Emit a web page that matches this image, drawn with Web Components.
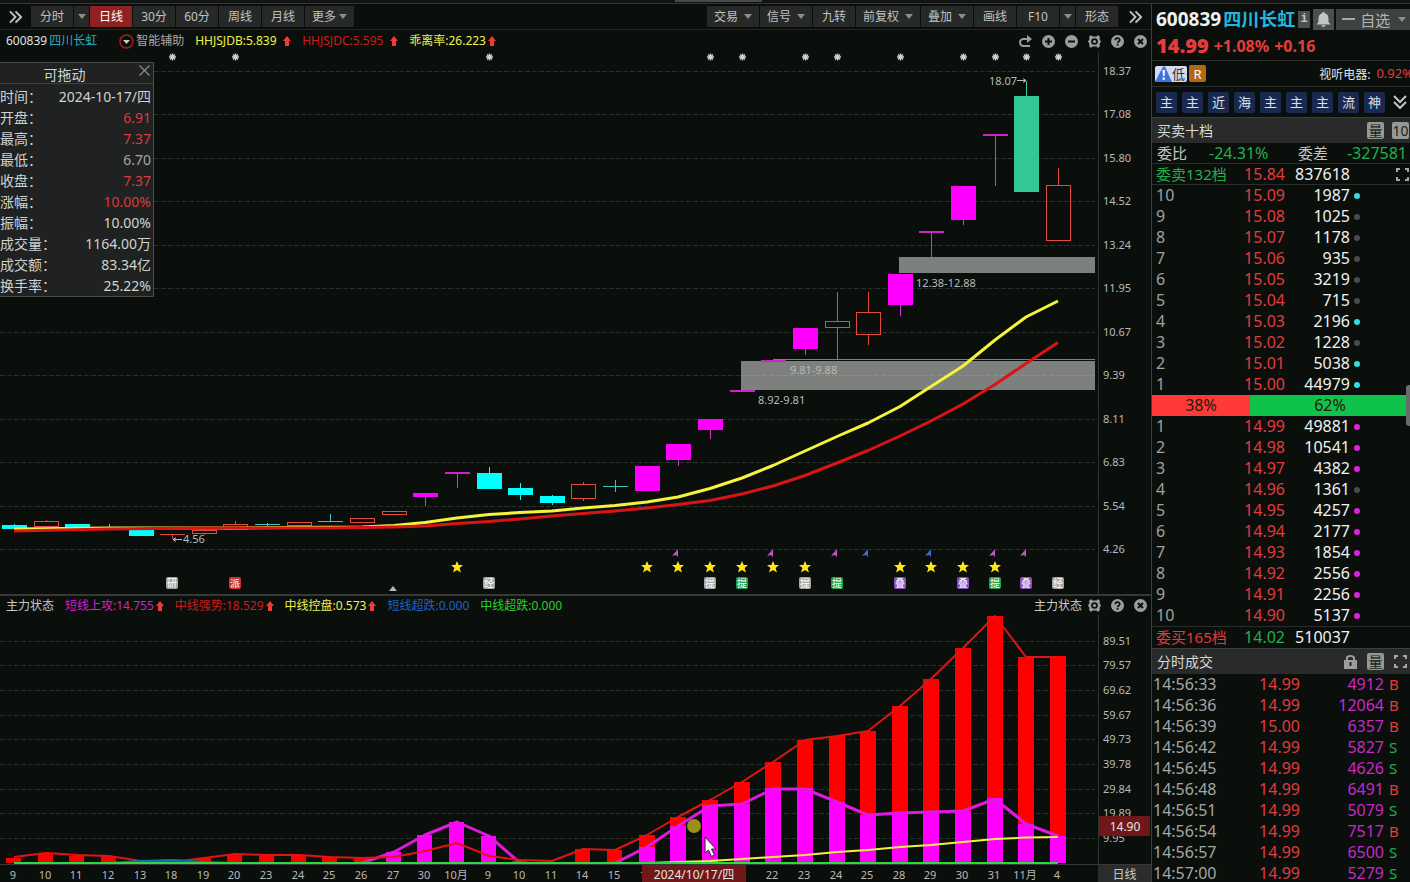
<!DOCTYPE html>
<html lang="zh-CN">
<head>
<meta charset="utf-8">
<title>四川长虹 600839</title>
<style>
html,body{margin:0;height:100%;background:#0b0f0c;overflow:hidden}
body{font-family:"Noto Sans","Noto Sans CJK SC",sans-serif;font-size:12px;color:#c8cac8}
</style>
</head>
<body>
<stock-terminal></stock-terminal>
<script>
const RESET = `*{box-sizing:border-box}
button{font:inherit;color:inherit;border:0;padding:0;margin:0;background:none;display:flex;align-items:center;justify-content:center}
svg{display:block}table{border-collapse:collapse;border-spacing:0;table-layout:fixed;width:100%}td,th{padding:0;font-weight:400}`;

class Base extends HTMLElement {
  constructor() {
    super();
    this.attachShadow({ mode: 'open' });
  }
  render(css, html) {
    this.shadowRoot.innerHTML = `<style>${RESET}${css}</style>${html}`;
  }
}

/* ---------- icons ---------- */
const ICONS = {
  more: [14, 14, '<path d="M1 1l6 6-6 6M7 1l6 6-6 6" fill="none" stroke="#c4c6c4" stroke-width="2"/>'],
  down: [14, 14, '<path d="M1 1l6 6 6-6M1 7l6 6 6-6" fill="none" stroke="#c4c6c4" stroke-width="2"/>'],
  caret: [8, 5, '<path d="M0 0h8L4 5z" fill="#8c8e8c"/>'],
  up: [8, 10, '<path d="M4 0l4 5H6v5H2V5H0z" fill="#f03a36"/>'],
  assist: [15, 15, '<circle cx="7.500" cy="7.500" r="6.500" fill="none" stroke="#a02020" stroke-width="1.500"/><path d="M4 6h7l-3.500 4z" fill="#c8cac8"/>'],
  redo: [13, 13, '<path d="M9 4H4.500a3.500 3.500 0 0 0 0 7H11" fill="none" stroke="#9c9e9c" stroke-width="2"/><path d="M8 0l5 4-5 4z" fill="#9c9e9c"/>'],
  plus: [13, 13, '<circle cx="6.500" cy="6.500" r="6.500" fill="#9c9e9c"/><path d="M6.500 3v7M3 6.500h7" stroke="#0b0f0c" stroke-width="2"/>'],
  minus: [13, 13, '<circle cx="6.500" cy="6.500" r="6.500" fill="#9c9e9c"/><path d="M3 6.500h7" stroke="#0b0f0c" stroke-width="2"/>'],
  gear: [13, 13, '<path d="M3 0l1.500 1.500h4L10 0l2 2-.5 2 1.500 2.500-1.500 2.500.5 2-2 2-1.500-1.500h-4L3 13l-2-2 .5-2L0 6.500 1.500 4 1 2z" fill="#9c9e9c"/><circle cx="6.500" cy="6.500" r="3.300" fill="#0b0f0c"/><circle cx="6.500" cy="6.500" r="1.600" fill="#9c9e9c"/>'],
  help: [13, 13, '<circle cx="6.500" cy="6.500" r="6.500" fill="#9c9e9c"/><path d="M4.300 5.200C4.300 2.500 8.800 2.500 8.800 5c0 1.500-2.200 1.500-2.200 3.200M6.600 9v1.800" fill="none" stroke="#0b0f0c" stroke-width="1.700"/>'],
  close: [13, 13, '<circle cx="6.500" cy="6.500" r="6.500" fill="#9c9e9c"/><path d="M4 4l5 5M9 4l-5 5" stroke="#0b0f0c" stroke-width="2"/>'],
  x: [11, 11, '<path d="M.5.5l10 10M10.500.5l-10 10" stroke="#8c8e8c" stroke-width="1.200"/>'],
  bell: [15, 15, '<path d="M7.500 0c.8 0 1.200.5 1.200 1.200C11.500 2 12.500 4 12.500 7v3l2 2.500h-14L2.500 10V7c0-3 1-5 3.800-5.800C6.300.5 6.700 0 7.500 0zM5.500 13.300h4c-.4 2-3.600 2-4 0z" fill="#c4c6c4"/>'],
  dash: [13, 2, '<path d="M0 0h13v2H0z" fill="#a8aaa8"/>'],
  expand: [13, 13, '<path d="M1 4V1h3M9 1h3v3M12 9v3H9M4 12H1V9" fill="none" stroke="#a4a6a4" stroke-width="2"/>'],
  lock: [13, 15, '<path d="M0 6h2V3.500C2 0 11 0 11 3.500V6h2v9H0zM4 6h5V4c0-1.500-5-1.500-5 0z" fill="#9c9e9c" fill-rule="evenodd"/><path d="M5.500 8h2v4h-2z" fill="#282a29"/>'],
  warn: [17, 16, '<path d="M8 0.500h2L17 16H0z" fill="#3c74e0"/><path d="M7.500 4h2.500l-.5 6h-1.500zM7.600 11.500h2.300v2.300H7.600z" fill="#fff"/>']
};
const icon = n => { const [w, h, b] = ICONS[n]; return `<svg width="${w}" height="${h}" viewBox="0 0 ${w} ${h}" aria-hidden="true">${b}</svg>`; };

customElements.define('ui-icon', class extends Base {
  connectedCallback() { this.render(':host{display:block;flex:none}', icon(this.getAttribute('name'))); }
});

/* ---------- toolbar ---------- */
customElements.define('tool-button', class extends Base {
  connectedCallback() {
    const caret = this.getAttribute('caret'), split = this.hasAttribute('split'), on = this.hasAttribute('active');
    this.render(`:host{display:flex;gap:1px}
      button{height:21px;min-width:42px;padding:0 7px;gap:${caret === 'tight' ? 3 : 6}px;background:${on ? '#8e2222' : '#262928'};color:${on ? '#fff' : '#c0c2c0'};line-height:21px;white-space:nowrap}
      .drop{min-width:15px;padding:0}`,
      `<button><slot></slot>${caret ? icon('caret') : ''}</button>${split ? `<button class="drop" aria-label="展开">${icon('caret')}</button>` : ''}`);
  }
});
customElements.define('tool-bar', class extends Base {
  connectedCallback() {
    this.render(`:host{display:flex;justify-content:space-between;height:26px;padding:2px 9px 0;flex:none;border-bottom:1px solid #232624}
      nav{display:flex;gap:1px}.more{width:13px;height:21px}.l .more{margin-right:8px}.r .more{margin-left:10px}`,
      `<nav class="l"><button class="more" aria-label="展开">${icon('more')}</button>
        <tool-button split>分时</tool-button><tool-button active>日线</tool-button><tool-button>30分</tool-button><tool-button>60分</tool-button><tool-button>周线</tool-button><tool-button>月线</tool-button><tool-button caret="tight">更多</tool-button></nav>
      <nav class="r"><tool-button caret="wide">交易</tool-button><tool-button caret="wide">信号</tool-button><tool-button>九转</tool-button><tool-button caret="wide">前复权</tool-button><tool-button caret="wide">叠加</tool-button><tool-button>画线</tool-button><tool-button split>F10</tool-button><tool-button>形态</tool-button><button class="more" aria-label="更多">${icon('more')}</button></nav>`);
  }
});

/* ---------- pane header ---------- */
customElements.define('pane-legend', class extends Base {
  connectedCallback() {
    this.render(`:host{display:flex;align-items:center;justify-content:space-between;flex:none;padding:0 4px 0 6px;line-height:18px;white-space:nowrap}
      div{display:flex;align-items:center;gap:11px}.tools{gap:10px}.tools ::slotted(span){margin-right:-4px}`,
      `<div><slot></slot></div><div class="tools"><slot name="tools"></slot></div>`);
  }
});
customElements.define('legend-value', class extends Base {
  connectedCallback() {
    const w = this.getAttribute('width');
    this.render(`:host{display:flex;align-items:center;gap:2px;color:${this.getAttribute('color')}}
      span{min-width:${w || 0}px}`,
      `<span><slot></slot></span>${this.hasAttribute('up') ? icon('up') : ''}`);
  }
});

/* ---------- charts ---------- */
const AXIS = 53, PLOT = 1098, FIRST = 14, LAST = 1058, COUNT = 34;
const center = i => FIRST + i * (LAST - FIRST) / (COUNT - 1);

class Chart extends Base {
  connectedCallback() {
    this.render(':host{display:block;position:relative;overflow:hidden;min-height:0}svg{position:absolute;inset:0;width:100%;height:100%}text{font-size:11px;fill:#b8bab8}', '<svg></svg>');
    this.svg = this.shadowRoot.querySelector('svg');
    new ResizeObserver(() => this.paint()).observe(this);
    this.paint();
  }
  paint() {
    this.w = this.clientWidth; this.h = this.clientHeight;
    this.kx = (this.w - AXIS) / PLOT; this.ky = this.h / this.span;
    this.svg.innerHTML = this.draw();
  }
  X(v) { return Math.round(v * this.kx); }
  Y(v) { return Math.round((v - this.top) * this.ky); }
  rect(x, y, w, h, fill, extra = '') { return `<rect x="${x}" y="${y}" width="${w}" height="${h}" fill="${fill}" ${extra}/>`; }
  line(points, color, width) {
    const p = points.map(([i, y]) => `${this.X(center(i))},${((y - this.top) * this.ky).toFixed(1)}`).join(' ');
    return `<polyline points="${p}" fill="none" stroke="${color}" stroke-width="${width}" stroke-linejoin="round"/>`;
  }
  text(x, y, s, extra = '') { return `<text x="${x}" y="${y}" ${extra}>${s}</text>`; }
  grid(first, step, n, color = '#2b2f2c') {
    let s = '';
    for (let k = 0; k < n; k++) { const y = this.Y(first + k * step) + .5; s += `<path d="M0 ${y}H${this.X(1095)}" stroke="${color}" stroke-dasharray="5 2"/>`; }
    return s;
  }
  scale(first, step, labels) {
    const x = this.w - AXIS;
    return `<path d="M${x + .5} 0V${this.h}" stroke="#2e3230"/>` +
      labels.map((t, k) => this.text(x + 5, this.Y(first + k * step) + 4, t)).join('');
  }
}

/* kind, body top, body bottom, wick top, wick bottom */
const CANDLES = [
  ['c',525,529,524,529],['r',521,527,520,527],['c',524,527,524,527],['cl',527,527,524,528],['c',530,536,530,536],['rl',534,534,534,539],['r',530,534,530,535],
  ['r',524,530,521,530],['cl',524,524,523,527],['r',522,526,522,526],['cl',521,521,514,522],['r',518,523,518,523],['r',511,515,511,515],['m',493,497,493,506],
  ['m',472,474,472,488],['c',473,489,467,489],['c',488,495,483,500],['c',496,503,495,505],['r',484,499,482,501],['cl',486,486,480,492],['m',466,491,466,491],
  ['m',444,460,444,466],['m',419,430,419,439],['m',390,392,390,392],['m',360,362,360,362],['m',328,349,328,355],['r',321,328,292,359],['r',312,335,292,345],
  ['m',274,305,274,316],['m',231,233,231,257],['m',186,220,186,225],['m',134,136,134,186],['g',96,192,81,192],['r',185,241,168,241]
];
const MA_FAST = [[0,529],[3,528],[7,528],[11,527],[12,525.5],[13,522.5],[14,518],[15,514.5],[16,512.5],[17,511],[18,508],[19,505.5],[20,502],[21,497],[22,488.5],[23,478],[24,465.5],[25,451],[26,436.5],[27,423],[28,406.5],[29,386.5],[30,366],[31,340],[32,317],[33,301]];
const MA_SLOW = [[0,531],[3,529],[6,528],[10,528],[12,527],[13,526],[14,523.5],[15,521.5],[16,519],[17,516],[18,513.5],[19,511],[20,508],[21,504.5],[22,500.5],[23,494],[24,486],[25,475.5],[26,463],[27,450.5],[28,436],[29,421],[30,404],[31,384.5],[32,363.5],[33,342.5]];
const BADGES = [[5,'研','#a4a6a4'],[7,'派','#c63434'],[15,'经','#a4a6a4'],[22,'提','#a4a6a4'],[23,'提','#1fa04c'],[25,'提','#a4a6a4'],[26,'提','#1fa04c'],[28,'叠','#8a4cc0'],[30,'叠','#8a4cc0'],[31,'提','#1fa04c'],[32,'叠','#8a4cc0'],[33,'经','#a4a6a4']];
const COLORS = { c: '#00ffff', m: '#ff00ff', r: '#e04c40', g: '#32c896', cl: '#3cc8c0', rl: '#e04c40' };

customElements.define('price-chart', class extends Chart {
  top = 52; span = 542;
  draw() {
    let s = this.grid(71, 43.45, 12);
    const right = this.X(1095);
    const zone = (x, a, b) => this.rect(this.X(x), this.Y(a), right - this.X(x), this.Y(b) - this.Y(a), '#7e807e');
    s += zone(899, 257, 273) + zone(741, 361, 390) + zone(773, 359, 360);
    s += `<path d="M${this.X(741)} ${this.Y(375) + .5}H${right}" stroke="#8c8e8c" stroke-dasharray="5 2"/>`;
    CANDLES.forEach(([k, a, b, wt, wb], i) => {
      const x = this.X(center(i)), c = COLORS[k], ya = this.Y(a), yb = this.Y(b), t = this.Y(wt), e = this.Y(wb);
      const wick = k === 'm' ? '#d038d8' : c;
      if (t < ya) s += this.rect(x, t, 1, ya - t, wick);
      if (e > yb) s += this.rect(x, yb, 1, e - yb, wick);
      if (k === 'r') s += `<rect x="${x - 12 + .5}" y="${ya + .5}" width="24" height="${Math.max(yb - ya - 1, 2)}" fill="none" stroke="${c}"/>`;
      else s += this.rect(x - 12, ya, 25, Math.max(yb - ya, 1), b - a <= 2 && k === 'm' ? '#d020d0' : c);
    });
    s += this.line(MA_FAST, '#f4f43c', 3) + this.line(MA_SLOW, '#d81414', 3);
    s += this.text(this.X(989), this.Y(85), '18.07') + `<path d="M${this.X(1017)} ${this.Y(80) + .5}h9m-3-2l3 2-3 2" fill="none" stroke="#b8bab8"/>`;
    s += this.text(this.X(183), this.Y(543), '4.56') + `<path d="M${this.X(182)} ${this.Y(539) + .5}h-9m3-2l-3 2 3 2" fill="none" stroke="#b8bab8"/>`;
    s += this.text(this.X(916), this.Y(287), '12.38-12.88') + this.text(this.X(790), this.Y(374), '9.81-9.88') + this.text(this.X(758), this.Y(404), '8.92-9.81');
    for (const i of [5,7,15,22,23,25,26,28,30,31,32,33]) {
      const x = this.X(center(i)) + .5, y = this.Y(57);
      s += `<path d="M${x - 3.500} ${y}h7M${x} ${y - 3.500}v7M${x - 2.500} ${y - 2.500}l5 5M${x + 2.500} ${y - 2.500}l-5 5" stroke="#d0d2d0" stroke-width="1.400"/>`;
    }
    for (const i of [14,20,21,22,23,24,25,28,29,30,31]) {
      s += `<path transform="translate(${this.X(center(i))} ${this.Y(567)})" d="M0-6l1.700 4H6L2.600 1 4 5.500 0 3-4 5.500-2.600 1-6-2h4.300z" fill="#ffe818"/>`;
    }
    for (const [i, c] of [[21,'#c850c8'],[24,'#c850c8'],[26,'#c850c8'],[27,'#4468c8'],[29,'#4468c8'],[31,'#c850c8'],[32,'#c850c8']]) {
      s += `<path transform="translate(${this.X(center(i))} ${this.Y(553)})" d="M0-4v8l-2-2-4 1z" fill="${c}"/>`;
    }
    for (const [i, t, c] of BADGES) {
      const x = this.X(center(i)), y = this.Y(583);
      s += this.rect(x - 6, y - 6, 12, 12, c, 'rx="2"') + this.text(x, y + 4, t, 'text-anchor="middle" style="font-size:10px;fill:#fff"');
    }
    s += `<path d="M${this.X(393) - 4} ${this.Y(591)}h8l-4-5z" fill="#b8bab8"/>`;
    return s + this.scale(71, 43.45, ['18.37','17.08','15.80','14.52','13.24','11.95','10.67','9.39','8.11','6.83','5.54','4.26']);
  }
});

const RED_BARS = [[0,858],[1,853],[2,856],[3,856],[6,858],[7,854],[8,855],[9,855],[10,857],[11,858],[16,861],[18,849],[19,850],[20,835],[21,817],[22,800],[23,782],[24,762],[25,740],[26,736],[27,731],[28,706],[29,679],[30,648],[31,616],[32,657],[33,656]];
const PINK_BARS = [[12,852],[13,835],[14,822],[15,836],[20,847],[21,826],[22,805],[23,804],[24,788],[25,788],[26,802],[27,815],[28,813],[29,812],[30,811],[31,798],[32,824],[33,836]];
const FORCE = [[0,857],[1,853],[2,855],[3,856],[4,861],[5,862],[6,858],[7,854],[8,855],[9,855],[10,857],[11,858],[12,857],[13,851],[14,843],[15,856],[16,860],[17,861],[18,849],[19,850],[20,835],[21,817],[22,800],[23,782],[24,762],[25,740],[26,736],[27,731],[28,706],[29,679],[30,648],[31,616],[32,657],[33,657]];

customElements.define('state-chart', class extends Chart {
  top = 615; span = 249;
  draw() {
    let s = this.grid(640.5, 24.7, 9);
    const base = this.Y(863);
    const bar = c => ([i, y]) => { const w = i < 20 ? 15 : 16; s += this.rect(this.X(center(i)) - 8, this.Y(y), w, base - this.Y(y), c); };
    RED_BARS.forEach(bar('#ff0000'));
    PINK_BARS.forEach(bar('#ff00ff'));
    s += this.line([[11,863],[12,852],[13,835],[14,822],[15,836],[16,863]], '#e018e0', 3);
    s += this.line([[19,863],[20,847],[21,826],[22,806],[23,804],[24,789],[25,789],[26,802],[27,815],[28,813],[29,812],[30,811],[31,799],[32,824],[33,836]], '#e018e0', 3);
    s += this.line(FORCE, '#e01414', 2);
    s += this.line([[3,863],[4,861],[5,860],[6,862],[7,863]], '#2068c8', 2);
    s += this.line([[20,863],[21,862],[22,861],[23,859],[24,857],[25,855],[26,852],[27,850],[28,847],[29,845],[30,842],[31,839],[32,837.5],[33,837]], '#f4f040', 2);
    s += this.line([[0,863],[33,863]], '#30d840', 2);
    s += `<circle cx="${this.X(694)}" cy="${this.Y(826)}" r="7" fill="#98901a"/>`;
    s += `<path transform="translate(${this.X(705)} ${this.Y(837)})" d="M0 0v16l3.500-3 3 6.500 3-1.500-3-6H11z" fill="#fff" stroke="#222"/>`;
    s += this.scale(640.5, 24.7, ['89.51','79.57','69.62','59.67','49.73','39.78','29.84','19.89','9.95']);
    const x = this.w - AXIS + 1, y = this.Y(816);
    return s + this.rect(x, y, 51, 20, '#701818') + this.text(x + 26, y + 15, '14.90', 'text-anchor="middle" style="font-size:12px;fill:#e4e6e4"');
  }
});

customElements.define('date-axis', class extends Chart {
  top = 865; span = 17;
  draw() {
    const days = ['9','10','11','12','13','18','19','20','23','24','25','26','27','30','10月','9','10','11','14','15','16','','','','22','23','24','25','28','29','30','31','11月','4'];
    let s = days.map((d, i) => d && this.text(this.X(center(i)) - 1, this.Y(879), d, 'text-anchor="middle"')).join('');
    const x = this.X(642);
    return s + this.rect(x, 0, 104, this.h, '#701818') + this.text(x + 52, this.Y(879), '2024/10/17/四', 'text-anchor="middle" style="font-size:12px;fill:#e4e6e4"');
  }
});

/* ---------- floating data card ---------- */
customElements.define('day-card', class extends Base {
  connectedCallback() {
    const rows = [['时间','2024-10-17/四'],['开盘','6.91','up'],['最高','7.37','up'],['最低','6.70','dim'],['收盘','7.37','up'],['涨幅','10.00%','up'],['振幅','10.00%'],['成交量','1164.00万'],['成交额','83.34亿'],['换手率','25.22%']];
    this.render(`:host{display:block;position:absolute;left:0;top:62px;width:154px;background:#1f2220;border:1px solid #4a4d4b;border-left:0;font-size:14px;color:#d0d2d0;white-space:nowrap}
      header{display:flex;align-items:center;height:21px;border-bottom:1px solid #3c3f3d;padding:3px 3px 0 0;line-height:17px}
      header span{flex:1;text-align:center;margin-right:10px}header button{width:11px;height:15px;align-items:flex-start;margin-bottom:5px}
      table{margin-top:2px}tr{height:21px}th{text-align:left;width:52px}td{text-align:right;padding-right:2px}th,td{line-height:20px}.up{color:#d83c3c}.dim{color:#a4a8a6}`,
      `<header><span>可拖动</span><button aria-label="关闭">${icon('x')}</button></header>
       <table>${rows.map(([a, b, c = '']) => `<tr><th>${a}：</th><td class="${c}">${b}</td></tr>`).join('')}</table>`);
  }
});

/* ---------- right panel ---------- */
customElements.define('section-title', class extends Base {
  connectedCallback() {
    const wide = this.hasAttribute('wide');
    this.render(`:host{display:flex;align-items:center;gap:${wide ? 10 : 8}px;height:26px;flex:none;background:#282b29;border-top:1px solid #3c3f3d;padding:0 ${wide ? 3 : 1}px 0 5px;font-size:14px;line-height:24px;color:#d8dad8}
      span{flex:1}`, `<span><slot></slot></span><slot name="tools"></slot>`);
  }
});
customElements.define('text-tile', class extends Base {
  connectedCallback() {
    this.render(`:host{display:block;flex:none}button{width:17px;height:17px;border-radius:2px;background:#969896;color:#1c1e1c;font-size:14px;line-height:17px}`, `<button><slot></slot></button>`);
  }
});
customElements.define('quote-head', class extends Base {
  connectedCallback() {
    this.render(`:host{display:block;flex:none;white-space:nowrap}
      .id{display:flex;align-items:center;height:30px;padding:0 0 0 4px;gap:2px}
      .code{font-size:19px;font-weight:700;color:#f0f2f0;line-height:28px}.name{font-size:18px;font-weight:700;color:#20b8e0;line-height:28px}
      .i{width:12px;height:17px;background:#4c4f4d;font:700 12px "Liberation Mono",monospace;color:#c4c6c4;margin:0 1px}
      .bell{width:21px;height:21px;background:#4c4f4d}.fav{flex:1;height:21px;background:#3e413f;gap:5px;font-size:15px;color:#b4b6b4;justify-content:flex-start;padding-left:6px}
      .fav svg:last-child{margin-left:3px}
      .price{display:flex;align-items:center;gap:5px;height:27px;padding:0 0 2px 4px;font-weight:700;font-size:16px;color:#e83c3c;border-bottom:1px solid #2a2d2b}.price b{font-size:20px;line-height:24px}
      .tags{display:flex;align-items:center;height:26px;padding-left:3px;border-bottom:1px solid #2a2d2b}
      .risk{display:flex;background:#d4dcf4;border-radius:2px;color:#333;font-size:13px;line-height:16px;height:16px;width:32px}
      .r{width:17px;height:17px;border-radius:2px;background:#b4680f;color:#fff;font-size:13px;margin-left:2px}
      .sector{flex:1;display:flex;justify-content:flex-end;gap:6px;color:#e4e6e4}.sector b{font-weight:400;font-size:13px;color:#e03c3c;line-height:17px;margin-right:-3px}
      .links{display:flex;align-items:center;gap:5px;height:30px;padding-left:4px}.links button{width:21px;height:21px;border-radius:2px;background:#1a2950;color:#dce0e8;font-size:13px;line-height:21px}
      .links .more{background:none;margin-left:3px;width:14px}`,
      `<div class="id"><span class="code">600839</span><span class="name">四川长虹</span><button class="i">i</button><button class="bell" aria-label="提醒">${icon('bell')}</button><button class="fav">${icon('dash')}自选${icon('caret')}</button></div>
       <div class="price"><b>14.99</b><span>+1.08%</span><span>+0.16</span></div>
       <div class="tags"><span class="risk">${icon('warn')}低</span><button class="r">R</button><span class="sector">视听电器: <b>0.92%</b></span></div>
       <div class="links">${[...'主主近海主主主流神'].map(t => `<button>${t}</button>`).join('')}<button class="more" aria-label="展开">${icon('down')}</button></div>`);
  }
});
customElements.define('order-book', class extends Base {
  connectedCallback() {
    const C = '#30e0e0', G = '#484c4e', M = '#e020e0';
    const sell = [[10,'15.09',1987,C],[9,'15.08',1025,G],[8,'15.07',1178,G],[7,'15.06',935,G],[6,'15.05',3219,G],[5,'15.04',715,G],[4,'15.03',2196,C],[3,'15.02',1228,G],[2,'15.01',5038,C],[1,'15.00',44979,C]];
    const buy = [[1,'14.99',49881,M],[2,'14.98',10541,M],[3,'14.97',4382,M],[4,'14.96',1361,G],[5,'14.95',4257,M],[6,'14.94',2177,M],[7,'14.93',1854,M],[8,'14.92',2556,M],[9,'14.91',2256,M],[10,'14.90',5137,M]];
    const rows = a => a.map(([n, p, q, c]) => `<tr><th>${n}</th><td class="p">${p}</td><td>${q}</td><td><i style="background:${c}"></i></td></tr>`).join('');
    const cols = '<colgroup><col style="width:83px"><col style="width:50px"><col style="width:65px"><col></colgroup>';
    this.render(`:host{display:block;flex:none;font-size:16px;color:#f0f2f0;line-height:21px}
      .ratio{display:grid;grid-template-columns:52px 89px 1fr auto;height:21px;line-height:20px;padding:0 3px 0 5px;border-bottom:1px solid #2a2d2b}
      .ratio label,.sum th{font-size:15px}.ratio label{color:#c4c6c4}.g{color:#20b04c}
      tr{height:21px}th{text-align:left;padding-left:4px;color:#a0a2a0}td{text-align:right}td i{display:block;width:6px;height:6px;border-radius:3px;margin-left:4px}
      .p,.buy th{color:#e03c3c}.sum.sell{height:21px;line-height:20px;border-bottom:1px solid #2a2d2b}.sum.sell tr{height:20px}.sum.buy{height:22px;line-height:20px;border-top:1px solid #2a2d2b}.sum.buy tr{height:20px}.sum th{white-space:nowrap;padding-left:4px}.sum .g{color:#20b04c}
      .sum ui-icon{float:right;margin-right:1px}
      .bar{display:flex;height:21px;color:#26180c}.bar span{text-align:center;background:#0fc24c;flex:62}.bar span:first-child{background:#ff3838;flex:38}`,
      `<div class="ratio"><label>委比</label><output class="g">-24.31%</output><label>委差</label><output class="g">-327581</output></div>
      <div class="sum sell"><table>${cols}<tr><th class="g">委卖132档</th><td class="p">15.84</td><td>837618</td><td><ui-icon name="expand"></ui-icon></td></tr></table></div>
      <table>${cols}${rows(sell)}</table>
      <div class="bar"><span>38%</span><span>62%</span></div>
      <table>${cols}${rows(buy)}</table>
      <div class="sum buy"><table>${cols}<tr><th>委买165档</th><td class="g">14.02</td><td>510037</td><td></td></tr></table></div>`);
  }
});
customElements.define('trade-list', class extends Base {
  connectedCallback() {
    const t = [['14:56:33','14.99',4912,'B'],['14:56:36','14.99',12064,'B'],['14:56:39','15.00',6357,'B'],['14:56:42','14.99',5827,'S'],['14:56:45','14.99',4626,'S'],['14:56:48','14.99',6491,'B'],['14:56:51','14.99',5079,'S'],['14:56:54','14.99',7517,'B'],['14:56:57','14.99',6500,'S'],['14:57:00','14.99',5279,'S']];
    this.render(`:host{display:block;font-size:16px;line-height:21px}
      tr{height:21px}th{text-align:left;padding-left:1px;color:#a4a6a4}td{text-align:right;color:#e03c3c}.v{color:#c828c8}.s{text-align:left;padding-left:5px;font-size:15px}.S{color:#20b04c}`,
      `<table><colgroup><col style="width:83px"><col style="width:65px"><col style="width:84px"><col></colgroup>${t.map(([a, p, v, s]) => `<tr><th>${a}</th><td>${p}</td><td class="v">${v}</td><td class="s ${s}">${s}</td></tr>`).join('')}</table>`);
  }
});
customElements.define('quote-panel', class extends Base {
  connectedCallback() {
    this.render(`:host{display:flex;flex-direction:column;position:relative;width:259px;flex:none;border-left:1px solid #3c3f3d;overflow:hidden}
      .thumb{position:absolute;right:0;top:381px;width:4px;height:41px;border-radius:3px 0 0 3px;background:#6a6c6a}`,
      `<quote-head></quote-head>
       <section-title>买卖十档<text-tile slot="tools">量</text-tile><text-tile slot="tools">10</text-tile></section-title>
       <order-book></order-book>
       <section-title wide>分时成交<ui-icon slot="tools" name="lock"></ui-icon><text-tile slot="tools">量</text-tile><ui-icon slot="tools" name="expand"></ui-icon></section-title>
       <trade-list></trade-list><span class="thumb"></span>`);
  }
});

/* ---------- application ---------- */
customElements.define('stock-terminal', class extends Base {
  connectedCallback() {
    const tools = names => names.map(n => `<ui-icon slot="tools" name="${n}"></ui-icon>`).join('');
    this.render(`:host{display:flex;flex-direction:column;height:100vh}
      .strip{height:4px;flex:none;border-bottom:1px solid #343735;background:linear-gradient(#484b49,#484b49) 51% 0/87px 2px no-repeat #111412}
      .body{display:flex;flex:1;min-height:0}
      main{display:flex;flex-direction:column;flex:1;min-width:0}
      .top{height:22px}.sub{height:21px;border-top:2px solid #363937}
      price-chart{flex:542 1 0}state-chart{flex:249 1 0}
      .assist{display:flex;align-items:center;gap:2px;color:#a8aaa8;margin-left:11px}
      .name{color:#28acc8;margin-left:-9px}.code{color:#e0e2e0}
      .dates{display:flex;height:18px;flex:none;border-top:1px solid #363937}.dates date-axis{flex:1;margin-right:-53px}.dates button{position:relative;width:53px;background:#2a2d2b;color:#c8cac8}`,
      `<div class="strip"></div>
      <div class="body"><main>
        <tool-bar></tool-bar>
        <pane-legend class="top"><span class="code">600839</span><span class="name">四川长虹</span><span class="assist">${icon('assist')}智能辅助</span>
          <legend-value color="#f0f04c" width="86" up>HHJSJDB:5.839</legend-value><legend-value color="#c81e1e" width="86" up>HHJSJDC:5.595</legend-value><legend-value color="#f0f04c" up>乖离率:26.223</legend-value>
          ${tools(['redo', 'plus', 'minus', 'gear', 'help', 'close'])}</pane-legend>
        <price-chart></price-chart>
        <pane-legend class="sub"><span>主力状态</span><legend-value color="#d020d0" up>短线上攻:14.755</legend-value><legend-value color="#c81e1e" up>中线强势:18.529</legend-value><legend-value color="#f0f04c" up>中线控盘:0.573</legend-value><legend-value color="#2064c8">短线超跌:0.000</legend-value><legend-value color="#28d028">中线超跌:0.000</legend-value>
          <span slot="tools">主力状态</span>${tools(['gear', 'help', 'close'])}</pane-legend>
        <state-chart></state-chart>
        <div class="dates"><date-axis></date-axis><button>日线</button></div>
      </main><quote-panel></quote-panel></div>
      <day-card></day-card>`);
  }
});
</script>
</body>
</html>
